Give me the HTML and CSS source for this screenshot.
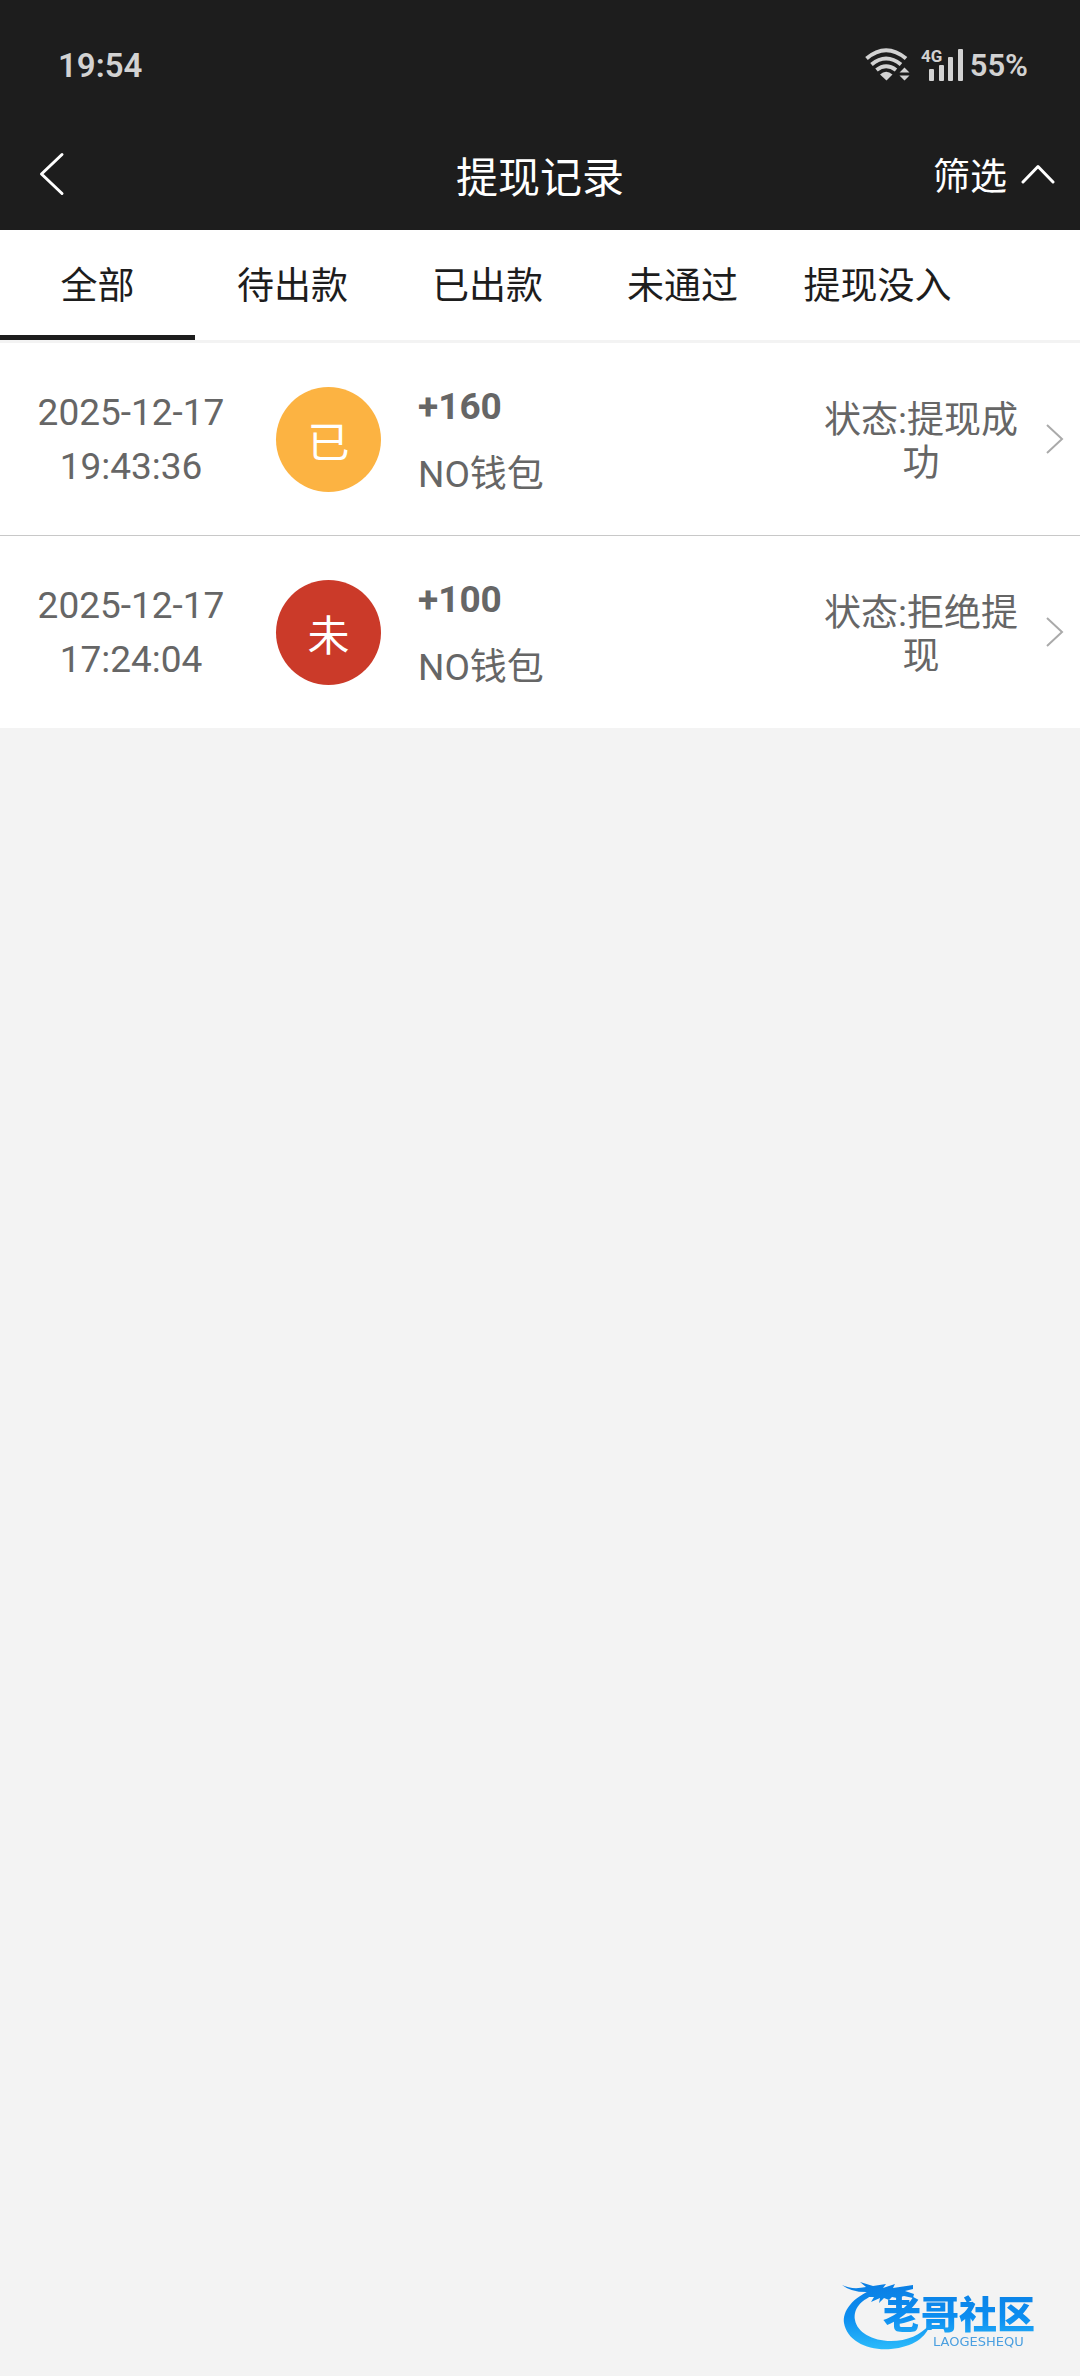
FILE: index.html
```html
<!DOCTYPE html>
<html lang="zh-CN">
<head>
<meta charset="utf-8">
<meta name="viewport" content="width=device-width, initial-scale=1">
<title>提现记录</title>
<link rel="stylesheet" href="styles.css">
</head>
<body>
<header class="top">
  <div class="status-bar">
    <span class="clock">19:54</span>
    <div class="indicators">
      <svg class="signals" viewBox="0 0 100 36" aria-hidden="true">
        <g fill="none" stroke="#d2d2d2" stroke-width="4">
          <path d="M1.500 11.500Q21 -5 41 11.500"/>
          <path d="M6.500 17.500Q21 5.500 36 17.500"/>
          <path d="M11.500 23Q21 15.500 31 23"/>
        </g>
        <g fill="#d2d2d2">
          <path d="M15 27.500Q21 22 27.500 27.500L21.500 33.500Z"/>
          <path d="M34.500 25.500L39.500 20.500L44.500 25.500ZM34.500 28.500H44.500L39.500 33.500Z"/>
          <rect x="64" y="22" width="5" height="12" rx="1"/>
          <rect x="74" y="18" width="5" height="16" rx="1"/>
          <rect x="83" y="10" width="5" height="24" rx="1"/>
          <rect x="93" y="2" width="5" height="32" rx="1"/>
          <text class="network" x="56" y="15">4G</text>
        </g>
      </svg>
      <span class="battery">55%</span>
    </div>
  </div>
  <div class="title-bar">
    <button class="back" type="button" aria-label="返回">
      <svg width="26" height="44" viewBox="0 0 26 44" fill="none" stroke="#fff" stroke-width="3" stroke-linecap="round" stroke-linejoin="round"><path d="M23 2.500L2.500 22L23 41.500"/></svg>
    </button>
    <h1 class="title">提现记录</h1>
    <button class="filter" type="button">筛选
      <svg width="34" height="20" viewBox="0 0 34 20" fill="none" stroke="#fff" stroke-width="3" stroke-linecap="round" stroke-linejoin="round"><path d="M2 18L17 2.500L32 18"/></svg>
    </button>
  </div>
</header>
<nav class="tabs">
  <button class="tab tab-active" type="button">全部</button>
  <button class="tab" type="button">待出款</button>
  <button class="tab" type="button">已出款</button>
  <button class="tab" type="button">未通过</button>
  <button class="tab" type="button">提现没入</button>
</nav>
<main class="records">
  <a class="record" href="#r1">
    <time class="date">2025-12-17<br>19:43:36</time>
    <span class="badge badge-paid">已</span>
    <span class="detail"><strong>+160</strong><span>NO钱包</span></span>
    <span class="state">状态:提现成功</span>
    <svg class="arrow" viewBox="0 0 20 32"><path d="M2 2L17 16L2 30"/></svg>
  </a>
  <a class="record" href="#r2">
    <time class="date">2025-12-17<br>17:24:04</time>
    <span class="badge badge-rejected">未</span>
    <span class="detail"><strong>+100</strong><span>NO钱包</span></span>
    <span class="state">状态:拒绝提现</span>
    <svg class="arrow" viewBox="0 0 20 32"><path d="M2 2L17 16L2 30"/></svg>
  </a>
</main>
<svg class="brand" viewBox="0 0 230 76" role="img" aria-label="老哥社区">
  <defs>
    <linearGradient id="sea" gradientUnits="userSpaceOnUse" x1="0" y1="4" x2="0" y2="70">
      <stop offset="0" stop-color="#0b7fe4"/>
      <stop offset="0.500" stop-color="#0c8df0"/>
      <stop offset="1" stop-color="#2cbcfb"/>
    </linearGradient>
  </defs>
  <g fill="url(#sea)">
    <path d="M34 9C12 17 2 32 4 43C7 61 28 71 51 69C73 67 87 57 90 44C81 55 67 61 51 61C32 61 17 52 15 40C13 29 21 19 37 14Z"/>
    <path d="M2 5Q12 10 26 7L20 2L33 6L46 4L43 8L55 4L53 8L73 5L73 9L65 11L74 14L73 18L64 16L57 18L52 17L49 20L44 18L39 23L40 18L31 22L34 17L27 17L30 12Q12 13 2 5Z"/>
    <text class="brand-name" x="43" y="48">老哥社区</text>
  </g>
  <text class="brand-latin" x="93" y="66">LAOGESHEQU</text>
</svg>
</body>
</html>
```
FILE: styles.css
```css
* {
  box-sizing: border-box;
}

body {
  margin: 0;
  min-height: 100vh;
  background: #f3f3f3;
  color: #666;
  font-family: Roboto, "Noto Sans CJK SC", sans-serif;
  font-size: 37px;
}

button {
  padding: 0;
  border: 0;
  background: none;
  color: inherit;
  font: inherit;
}

.top {
  background: #1d1d1d;
  color: #fff;
}

.status-bar {
  display: flex;
  align-items: center;
  justify-content: space-between;
  height: 118px;
  padding: 12px 52px 0 58px;
  color: #d2d2d2;
  font-size: 33px;
  font-weight: 600;
}

.indicators {
  display: flex;
  align-items: center;
  gap: 5px;
}

.signals {
  width: 100px;
  height: 36px;
}

.network {
  font-size: 17px;
  font-weight: 700;
}

.battery {
  font-size: 31px;
}

.title-bar {
  display: grid;
  grid-template-columns: 1fr auto 1fr;
  align-items: center;
  height: 112px;
  padding: 0 25px;
}

.back {
  justify-self: start;
  display: flex;
  padding: 0 14px;
}

.title {
  margin: 0;
  font-size: 42px;
  font-weight: 400;
}

.filter {
  justify-self: end;
  display: flex;
  align-items: center;
  gap: 14px;
}

.tabs {
  display: flex;
  height: 113px;
  border-bottom: 3px solid #f3f3f3;
  background: #fff;
  color: #1d1d1d;
}

.tab {
  flex: 0 0 195px;
  border-bottom: 5px solid transparent;
  white-space: nowrap;
}

.tab-active {
  border-bottom-color: #1d1d1d;
}

.record {
  display: grid;
  grid-template-columns: 262px 133px 1fr 204px 57px;
  align-items: center;
  height: 192px;
  background: #fff;
  color: inherit;
  text-decoration: none;
}

.record + .record {
  height: 193px;
  border-top: 1px solid #c8c8c8;
}

.date {
  padding-top: 2px;
  line-height: 54px;
  text-align: center;
}

.badge {
  display: grid;
  place-items: center;
  justify-self: center;
  width: 105px;
  height: 105px;
  border-radius: 50%;
  color: #fff;
  font-size: 42px;
}

.badge-paid {
  background: #fcb342;
}

.badge-rejected {
  background: #cb3a29;
}

.detail {
  display: flex;
  flex-direction: column;
  padding: 4px 0 0 23px;
  line-height: 68px;
}

.state {
  padding-top: 6px;
  line-height: 43px;
  text-align: center;
}

.arrow {
  width: 20px;
  height: 32px;
  margin-left: 22px;
  fill: none;
  stroke: #aaa;
  stroke-width: 2;
}

.brand {
  position: fixed;
  right: 10px;
  bottom: 20px;
  width: 230px;
  height: 76px;
}

.brand-name {
  font-family: "Noto Sans CJK SC", sans-serif;
  font-size: 38px;
  font-weight: 900;
}

.brand-latin {
  fill: #4a9fe0;
  font-family: "DejaVu Sans", sans-serif;
  font-size: 13px;
}
```
